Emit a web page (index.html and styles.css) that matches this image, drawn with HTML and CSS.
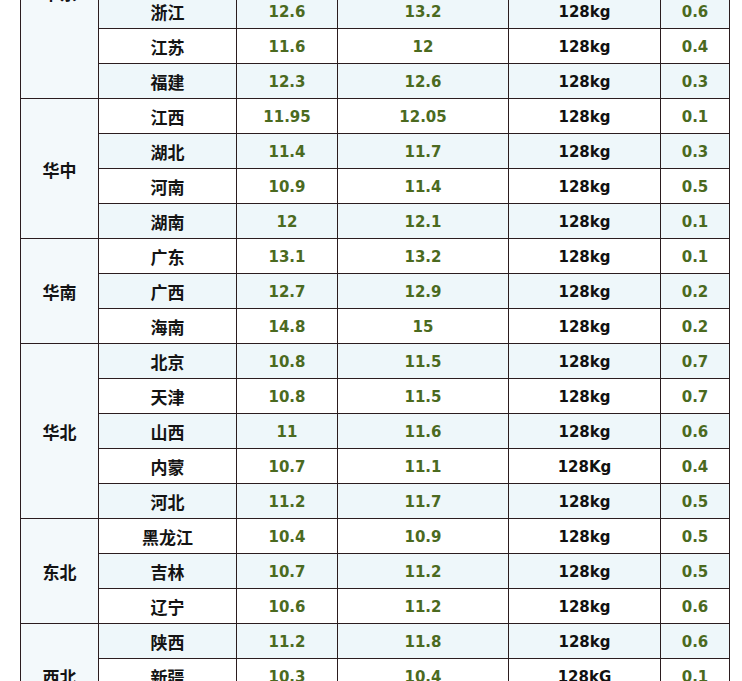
FILE: index.html
```html
<!DOCTYPE html>
<html lang="zh-CN">
<head>
<meta charset="utf-8">
<title>价格表</title>
<link rel="stylesheet" href="styles.css">
</head>
<body>
<table class="price">
  <colgroup>
    <col class="c-region"><col class="c-prov"><col class="c-v1"><col class="c-v2"><col class="c-w"><col class="c-d">
  </colgroup>
  <tbody>
    <tr class="odd"><td class="region region-first" rowspan="6">华东</td><td class="prov">上海</td><td class="num">12.8</td><td class="num">13.2</td><td class="w">128kg</td><td class="num">0.4</td></tr>
    <tr class="even"><td class="prov">山东</td><td class="num">11.2</td><td class="num">11.6</td><td class="w">128kg</td><td class="num">0.4</td></tr>
    <tr class="odd"><td class="prov">安徽</td><td class="num">11.5</td><td class="num">11.9</td><td class="w">128kg</td><td class="num">0.4</td></tr>
    <tr class="even"><td class="prov">浙江</td><td class="num">12.6</td><td class="num">13.2</td><td class="w">128kg</td><td class="num">0.6</td></tr>
    <tr class="odd"><td class="prov">江苏</td><td class="num">11.6</td><td class="num">12</td><td class="w">128kg</td><td class="num">0.4</td></tr>
    <tr class="even"><td class="prov">福建</td><td class="num">12.3</td><td class="num">12.6</td><td class="w">128kg</td><td class="num">0.3</td></tr>

    <tr class="odd"><td class="region" rowspan="4">华中</td><td class="prov">江西</td><td class="num">11.95</td><td class="num">12.05</td><td class="w">128kg</td><td class="num">0.1</td></tr>
    <tr class="even"><td class="prov">湖北</td><td class="num">11.4</td><td class="num">11.7</td><td class="w">128kg</td><td class="num">0.3</td></tr>
    <tr class="odd"><td class="prov">河南</td><td class="num">10.9</td><td class="num">11.4</td><td class="w">128kg</td><td class="num">0.5</td></tr>
    <tr class="even"><td class="prov">湖南</td><td class="num">12</td><td class="num">12.1</td><td class="w">128kg</td><td class="num">0.1</td></tr>

    <tr class="odd"><td class="region" rowspan="3">华南</td><td class="prov">广东</td><td class="num">13.1</td><td class="num">13.2</td><td class="w">128kg</td><td class="num">0.1</td></tr>
    <tr class="even"><td class="prov">广西</td><td class="num">12.7</td><td class="num">12.9</td><td class="w">128kg</td><td class="num">0.2</td></tr>
    <tr class="odd"><td class="prov">海南</td><td class="num">14.8</td><td class="num">15</td><td class="w">128kg</td><td class="num">0.2</td></tr>

    <tr class="even"><td class="region" rowspan="5">华北</td><td class="prov">北京</td><td class="num">10.8</td><td class="num">11.5</td><td class="w">128kg</td><td class="num">0.7</td></tr>
    <tr class="odd"><td class="prov">天津</td><td class="num">10.8</td><td class="num">11.5</td><td class="w">128kg</td><td class="num">0.7</td></tr>
    <tr class="even"><td class="prov">山西</td><td class="num">11</td><td class="num">11.6</td><td class="w">128kg</td><td class="num">0.6</td></tr>
    <tr class="odd"><td class="prov">内蒙</td><td class="num">10.7</td><td class="num">11.1</td><td class="w">128Kg</td><td class="num">0.4</td></tr>
    <tr class="even"><td class="prov">河北</td><td class="num">11.2</td><td class="num">11.7</td><td class="w">128kg</td><td class="num">0.5</td></tr>

    <tr class="odd"><td class="region" rowspan="3">东北</td><td class="prov">黑龙江</td><td class="num">10.4</td><td class="num">10.9</td><td class="w">128kg</td><td class="num">0.5</td></tr>
    <tr class="even"><td class="prov">吉林</td><td class="num">10.7</td><td class="num">11.2</td><td class="w">128kg</td><td class="num">0.5</td></tr>
    <tr class="odd"><td class="prov">辽宁</td><td class="num">10.6</td><td class="num">11.2</td><td class="w">128kg</td><td class="num">0.6</td></tr>

    <tr class="even"><td class="region" rowspan="3">西北</td><td class="prov">陕西</td><td class="num">11.2</td><td class="num">11.8</td><td class="w">128kg</td><td class="num">0.6</td></tr>
    <tr class="odd"><td class="prov">新疆</td><td class="num">10.3</td><td class="num">10.4</td><td class="w">128kG</td><td class="num">0.1</td></tr>
    <tr class="even"><td class="prov">甘肃</td><td class="num">10.8</td><td class="num">11.2</td><td class="w">128kg</td><td class="num">0.4</td></tr>
  </tbody>
</table>
</body>
</html>
```

FILE: styles.css
```css
html, body {
  margin: 0;
  padding: 0;
  background: #ffffff;
}

body {
  overflow: hidden;
}

.price {
  border-collapse: collapse;
  table-layout: fixed;
  width: 709px;
  margin: -112px 0 0 20px;
  font-family: "DejaVu Sans", "Noto Sans CJK SC", sans-serif;
  font-weight: bold;
}

.c-region { width: 78px; }
.c-prov { width: 138px; }
.c-v1 { width: 101px; }
.c-v2 { width: 171px; }
.c-w { width: 152px; }
.c-d { width: 69px; }

.price td {
  border: 1px solid #2b1d1f;
  height: 32px;
  padding: 2px 0 0;
  text-align: center;
  vertical-align: middle;
  line-height: 20px;
}

.price tr.odd td { background: #ffffff; }
.price tr.even td { background: #eef7fa; }
.price tr td.region { background: #f3f9fb; }
.price tr td.region-first { padding: 0 0 2px; }

.region,
.prov {
  font-family: "Noto Sans CJK SC", sans-serif;
  font-size: 17px;
  color: #141414;
}

.num {
  font-size: 15px;
  color: #4b6a1f;
}

.w {
  font-size: 15px;
  color: #111111;
}
```
